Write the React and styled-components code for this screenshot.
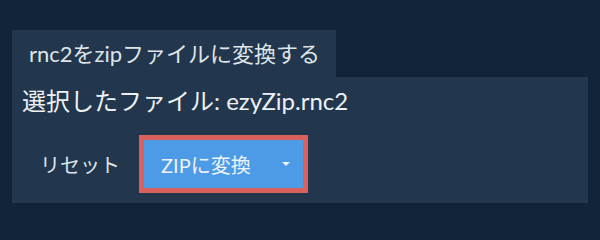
import React from 'react';
import styled, {createGlobalStyle} from "styled-components";

const GlobalStyle = createGlobalStyle`
  html, body {
    margin: 0;
    padding: 0;
    background-color: #11243a;
    font-family: "Lato", "Noto Sans CJK JP", sans-serif;
  }
`

const WrapperDiv = styled.div`
  padding: 30px 12px 0 12px;
  width: 576px;
`
const Tab = styled.div`
  display: inline-block;
  background-color: #22374d;
  color: #dfe4e9;
  font-size: 22px;
  line-height: 47px;
  height: 47px;
  padding: 0 16px 0 17px;
`
const Panel = styled.div`
  background-color: #22374d;
  height: 126px;
  padding: 6px 0 0 10px;
  box-sizing: border-box;
`
const Title_h = styled.h3`
  margin: 0;
  font-size: 24px;
  font-weight: 400;
  line-height: 36px;
  color: #eef1f4;
`
const ButtonRow = styled.div`
  display: flex;
  align-items: center;
  margin-top: 16px;
`
const ResetButton = styled.button`
  background: none;
  border: none;
  color: #dfe4e9;
  font-family: inherit;
  font-size: 20px;
  padding: 0 19px 0 18px;
  height: 48px;
`
const ConvertButton = styled.button`
  display: flex;
  align-items: center;
  width: 169px;
  height: 58px;
  box-sizing: border-box;
  background-color: #4d9be7;
  border: 5px solid #d9605b;
  color: #eef3f8;
  font-family: inherit;
  font-size: 20px;
  padding: 0 0 0 17px;
`
const Caret = styled.span`
  margin-left: auto;
  margin-right: 13px;
  width: 0;
  height: 0;
  border-left: 4px solid transparent;
  border-right: 4px solid transparent;
  border-top: 4px solid #eef3f8;
`

const App = () => {
    return (
        <WrapperDiv>
            <GlobalStyle/>
            <Tab>rnc2をzipファイルに変換する</Tab>
            <Panel>
                <Title_h>選択したファイル: ezyZip.rnc2</Title_h>
                <ButtonRow>
                    <ResetButton>リセット</ResetButton>
                    <ConvertButton>ZIPに変換<Caret/></ConvertButton>
                </ButtonRow>
            </Panel>
        </WrapperDiv>
    );
};

export default App;
